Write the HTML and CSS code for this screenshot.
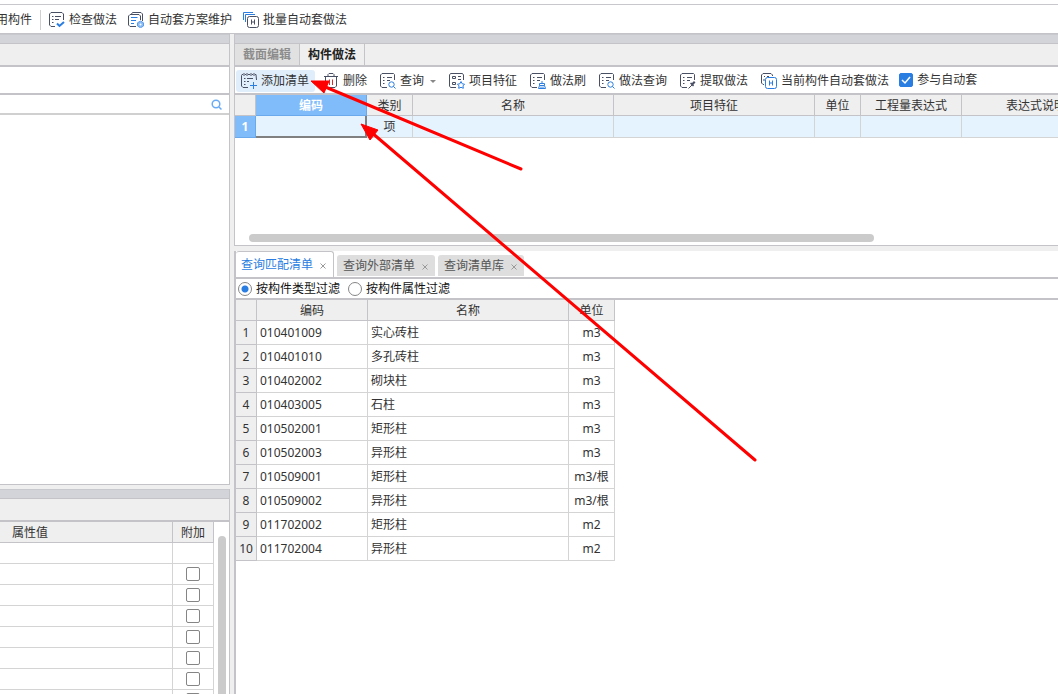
FILE: index.html
```html
<!DOCTYPE html>
<html lang="zh-CN">
<head>
<meta charset="utf-8">
<title>构件做法</title>
<link rel="stylesheet" href="styles.css">
</head>
<body>
<svg class="defs" aria-hidden="true">
  <symbol id="sheet" viewBox="0 0 16 16">
    <path class="ink" d="M7 14.5H2L.5 13V2L2 .5H13.5L14.500 1.500V7M3 4.500H4.500M7 4.500H12M3 7.500H4.500M7 7.500H10M3 10.500H4.500"/>
  </symbol>
  <symbol id="check" viewBox="0 0 16 16">
    <path class="ink" d="M6 14.500H2L.5 13V2L2 .5H13L14.500 2V8M3 4.500H4.500M6 4.500H12M3 7.500H4.500M6 7.500H10M3 10.500H4.500"/>
    <path class="blue thick" d="M8 11.500L10.500 14L15 10"/>
  </symbol>
  <symbol id="scheme" viewBox="0 0 16 16">
    <path class="ink" d="M3.500 2L4.500 .5H13L14.500 2V9M8 14.500H2L.5 13V4L2 2.500H11L12.500 4V8"/>
    <path class="blue" d="M3 5.500H9.500M3 8.500H8M3 11.500H6"/>
    <path class="gear" d="M12.500 9L15.500 10.800V14L12.500 15.800L9.500 14V10.800Z"/><circle class="hole" cx="12.500" cy="12.400" r="1"/>
  </symbol>
  <symbol id="batch" viewBox="0 0 16 16">
    <path class="blue" d="M.5 8V.5H10M2.500 10V2.500H12"/>
    <rect class="ink" x="4.500" y="4.500" width="11" height="11" rx="2"/><path class="ink" d="M8.500 7.500V12.500M11.500 7.500V12.500M8 10H12"/>
  </symbol>
  <symbol id="add" viewBox="0 0 16 16">
    <path class="ink" d="M2 1.500H1L.5 2.500V13L2 14.500H7M4 1.500H5M7 1.500H9M11 1.500H12M14 1.500H15L15.500 7M3 0V3M6 0V3M10 0V3M13 0V3M3 5.500H4.500M6 5.500H12M3 8.500H4.500M6 8.500H8M3 11.500H4.500"/>
    <path class="blue" d="M12.500 9V16M9 12.500H16"/>
  </symbol>
  <symbol id="trash" viewBox="0 0 16 16">
    <path class="ink" d="M1 3.500H15M5 3V1.500L6 .5H10L11 1.500V3M2.500 4V13L4 14.500H12L13.500 13V4"/>
    <path class="red" d="M6.500 6.500V12M9.500 6.500V12"/>
  </symbol>
  <symbol id="find" viewBox="0 0 16 16">
    <use href="#sheet"/><circle class="blue" cx="11.500" cy="11.500" r="2.700"/><path class="blue" d="M13.500 13.500L15.500 15.500"/>
  </symbol>
  <symbol id="feature" viewBox="0 0 16 16">
    <path class="ink" d="M7 14.500H1.500L.5 13V2L1.500 .5H13.500L14.500 2V7M3.500 3.500H6.500V5.500H3.500ZM3.500 9.500H6.500V11.500H3.500ZM9 3.500H12M9 6.500H12"/>
    <path class="blue" d="M12 8.500L13.200 10.800L15.500 11.200L14 12.900L14.300 15.300L12 14.300L9.700 15.300L10 12.900L8.500 11.200L10.800 10.800Z"/>
  </symbol>
  <symbol id="brush" viewBox="0 0 16 16">
    <use href="#sheet"/><path class="blue" d="M12 8V10.500M9.500 10.500H14.500V12.500H9.500ZM9.500 12.500L8.500 15.500H15.500L14.500 12.500M11 13.500V15M13 13.500V15"/>
  </symbol>
  <symbol id="pick" viewBox="0 0 16 16">
    <use href="#sheet"/><path class="ink" d="M8.500 15.500L12.500 11.500"/><path class="dark" d="M10 10.500L11 9.500L12 10L14 8L15.500 9.500L13.500 11.500L14 12.500L13 13.500Z"/>
  </symbol>
  <symbol id="current" viewBox="0 0 16 16">
    <path class="ink" d="M3 11.500H2L.5 10V2L2 .5H10L11.500 2V3M3 3.500H4M6 3.500H8M3 6V8"/>
    <rect class="blue" x="4.500" y="4.500" width="11" height="11" rx="2"/><path class="blue" d="M8.500 7.500V12.500M11.500 7.500V12.500M8 10H12"/>
  </symbol>
</svg>

<header class="topbar">
  <button class="tool cut">用构件</button>
  <span class="divider"></span>
  <button class="tool"><svg class="icon"><use href="#check"/></svg>检查做法</button>
  <button class="tool"><svg class="icon"><use href="#scheme"/></svg>自动套方案维护</button>
  <button class="tool"><svg class="icon"><use href="#batch"/></svg>批量自动套做法</button>
</header>

<main class="work">
  <aside class="side">
    <section class="panel list-panel">
      <div class="grip"></div>
      <div class="caption"></div>
      <div class="blank"></div>
      <div class="search">
        <input class="search-box" type="text" aria-label="搜索构件">
        <svg class="lens" viewBox="0 0 12 12"><circle cx="5" cy="5" r="3.800"/><path d="M8 8L10.500 10.500"/></svg>
      </div>
    </section>
    <section class="panel prop-panel">
      <div class="grip"></div>
      <div class="caption"></div>
      <div class="prop-body">
        <table class="grid props">
          <thead><tr><th class="value">属性值</th><th class="extra">附加</th></tr></thead>
          <tbody>
            <tr><td></td><td></td></tr>
            <tr><td></td><td><input class="box" type="checkbox" aria-label="附加 1"></td></tr>
            <tr><td></td><td><input class="box" type="checkbox" aria-label="附加 2"></td></tr>
            <tr><td></td><td><input class="box" type="checkbox" aria-label="附加 3"></td></tr>
            <tr><td></td><td><input class="box" type="checkbox" aria-label="附加 4"></td></tr>
            <tr><td></td><td><input class="box" type="checkbox" aria-label="附加 5"></td></tr>
            <tr><td></td><td><input class="box" type="checkbox" aria-label="附加 6"></td></tr>
            <tr><td></td><td><input class="box" type="checkbox" aria-label="附加 7"></td></tr>
          </tbody>
        </table>
        <div class="vscroll"></div>
      </div>
    </section>
  </aside>

  <div class="content">
    <section class="method">
      <div class="grip"></div>
      <nav class="tabs">
        <button class="tab muted">截面编辑</button>
        <button class="tab current">构件做法</button>
      </nav>
      <div class="toolbar">
        <button class="tool hot"><svg class="icon"><use href="#add"/></svg>添加清单</button>
        <button class="tool"><svg class="icon"><use href="#trash"/></svg>删除</button>
        <button class="tool"><svg class="icon"><use href="#find"/></svg>查询<span class="caret"></span></button>
        <button class="tool"><svg class="icon"><use href="#feature"/></svg>项目特征</button>
        <button class="tool"><svg class="icon"><use href="#brush"/></svg>做法刷</button>
        <button class="tool"><svg class="icon"><use href="#find"/></svg>做法查询</button>
        <button class="tool"><svg class="icon"><use href="#pick"/></svg>提取做法</button>
        <button class="tool"><svg class="icon"><use href="#current"/></svg>当前构件自动套做法</button>
        <label class="join"><input class="box" type="checkbox" checked>参与自动套</label>
      </div>
      <div class="method-body">
        <table class="grid items">
          <colgroup><col class="c-no"><col class="c-code"><col class="c-unit"><col class="c-name"><col class="c-name"><col class="c-unit"><col class="c-expr"><col class="c-desc"></colgroup>
          <thead><tr><th></th><th class="picked">编码</th><th>类别</th><th>名称</th><th>项目特征</th><th>单位</th><th>工程量表达式</th><th>表达式说明</th></tr></thead>
          <tbody><tr><th class="picked">1</th><td class="editing"></td><td>项</td><td></td><td></td><td></td><td></td><td></td></tr></tbody>
        </table>
        <div class="hscroll"></div>
      </div>
    </section>

    <section class="query">
      <nav class="query-tabs">
        <button class="qtab active">查询匹配清单<svg class="close" viewBox="0 0 6 6"><path d="M.5 .5L5.500 5.500M5.500 .5L.5 5.500"/></svg></button>
        <button class="qtab">查询外部清单<svg class="close" viewBox="0 0 6 6"><path d="M.5 .5L5.500 5.500M5.500 .5L.5 5.500"/></svg></button>
        <button class="qtab">查询清单库<svg class="close" viewBox="0 0 6 6"><path d="M.5 .5L5.500 5.500M5.500 .5L.5 5.500"/></svg></button>
      </nav>
      <div class="filters">
        <label class="choice"><input class="radio" type="radio" name="filter" checked>按构件类型过滤</label>
        <label class="choice"><input class="radio" type="radio" name="filter">按构件属性过滤</label>
      </div>
      <table class="grid matches">
        <colgroup><col class="c-no"><col class="c-code"><col class="c-name"><col class="c-unit"></colgroup>
        <thead><tr><th></th><th>编码</th><th>名称</th><th>单位</th></tr></thead>
        <tbody>
          <tr><th>1</th><td>010401009</td><td>实心砖柱</td><td>m3</td></tr>
          <tr><th>2</th><td>010401010</td><td>多孔砖柱</td><td>m3</td></tr>
          <tr><th>3</th><td>010402002</td><td>砌块柱</td><td>m3</td></tr>
          <tr><th>4</th><td>010403005</td><td>石柱</td><td>m3</td></tr>
          <tr><th>5</th><td>010502001</td><td>矩形柱</td><td>m3</td></tr>
          <tr><th>6</th><td>010502003</td><td>异形柱</td><td>m3</td></tr>
          <tr><th>7</th><td>010509001</td><td>矩形柱</td><td>m3/根</td></tr>
          <tr><th>8</th><td>010509002</td><td>异形柱</td><td>m3/根</td></tr>
          <tr><th>9</th><td>011702002</td><td>矩形柱</td><td>m2</td></tr>
          <tr><th>10</th><td>011702004</td><td>异形柱</td><td>m2</td></tr>
        </tbody>
      </table>
    </section>
  </div>
</main>

<svg class="arrows" width="760" height="470" viewBox="0 0 760 470" aria-hidden="true">
  <path class="shaft" d="M521 169L323 86M755 460L371 132"/>
  <path class="head" d="M311 81L329 81L324 93ZM361 124L378 130L370 140Z"/>
</svg>
</body>
</html>
```
FILE: styles.css
```css
* { box-sizing: border-box; }
html, body { height: 100%; }
body {
  margin: 0;
  display: flex;
  flex-direction: column;
  overflow: hidden;
  position: relative;
  background: #efefef;
  color: #333;
  font: 12px/16px "Noto Sans", "Noto Sans CJK SC", sans-serif;
}
button, input { font: inherit; color: inherit; margin: 0; }
button { border: 0; padding: 0; background: none; white-space: nowrap; }
.defs { position: absolute; width: 0; height: 0; }

/* icons */
.icon { width: 16px; height: 16px; flex: none; }
.ink { fill: none; stroke: #4a5064; }
.blue { fill: none; stroke: #2a7de1; }
.thick { stroke-width: 2; }
.red { fill: none; stroke: #e02828; }
.gear { fill: #8dbbf2; stroke: #5d9eea; }
.hole { fill: #fff; }
.dark { fill: #4a5064; }

/* top bar */
.topbar {
  display: flex;
  align-items: center;
  gap: 4px;
  height: 34px;
  flex: none;
  padding-top: 7px;
  background: linear-gradient(#c8c8cc, #c8c8cc) 0 4px / 100% 1px no-repeat #fff;
  border-bottom: 1px solid #c4c4c8;
}
.tool {
  display: flex;
  align-items: center;
  gap: 4px;
  height: 22px;
  padding: 0 4px 0 3px;
  border-radius: 3px;
}
.cut { margin-left: -7px; }
.divider { width: 1px; height: 20px; background: #d0d0d0; margin-right: 1px; }

/* panes */
.work { flex: 1; min-height: 0; display: flex; gap: 4px; }
.side { width: 230px; flex: none; display: flex; flex-direction: column; gap: 4px; }
.panel {
  display: flex;
  flex-direction: column;
  min-height: 0;
  overflow: hidden;
  background: #fff;
  border-right: 1px solid #c4c4c8;
}
.list-panel { flex: 11 1 0; border-bottom: 1px solid #c4c4c8; }
.prop-panel { flex: 5 1 0; }
.grip { height: 10px; flex: none; background: #d3d4da; border-top: 1px solid #c8c9cf; border-bottom: 1px solid #c4c4c8; }
.caption { height: 23px; flex: none; background: #efefef; border-bottom: 2px solid #c4c4c8; }
.blank { height: 28px; flex: none; border-bottom: 2px solid #c4c4c8; }
.search { height: 20px; flex: none; display: flex; align-items: center; padding: 1px 6px 0 0; border-bottom: 2px solid #d0d0d0; }
.search-box { flex: 1; min-width: 0; height: 16px; border: 0; outline: 0; background: none; }
.lens { width: 12px; height: 12px; fill: none; stroke: #6aabf5; stroke-width: 1.500; }

/* tables */
.grid { border-collapse: separate; border-spacing: 0; table-layout: fixed; }
.grid th, .grid td {
  padding: 0 3px;
  border-right: 1px solid #d4d4d4;
  border-bottom: 1px solid #d4d4d4;
  text-align: center;
  font-weight: normal;
  overflow: hidden;
  white-space: nowrap;
}
.grid th { background: #efefef; border-color: #c4c4c8; }
.grid thead th { padding-top: 2px; }
.c-no { width: 21px; }
.c-code { width: 111px; }
.c-unit { width: 46px; }
.c-name { width: 201px; }
.c-expr { width: 101px; }
.c-desc { width: 149px; }

.prop-body { display: flex; flex: 1; min-height: 0; overflow: hidden; align-items: flex-start; }
.props { width: 214px; }
.props tr { height: 21px; }
.props .value { text-align: left; padding-left: 12px; }
.props .extra { width: 41px; }
.props td { height: 21px; line-height: 14px; }
.vscroll { align-self: stretch; width: 8px; margin: 14px 3px 0 4px; background: #cbcbcb; border-radius: 4px 4px 0 0; }

.box {
  appearance: none;
  display: inline-block;
  width: 14px;
  height: 14px;
  border: 1px solid #858585;
  border-radius: 2px;
  background: #fff;
  vertical-align: top;
}
.box:checked {
  border-color: #2a7de1;
  background: #2a7de1 url("data:image/svg+xml,%3Csvg xmlns='http://www.w3.org/2000/svg' viewBox='0 0 12 12'%3E%3Cpath d='M2 6L5 9L10 3' fill='none' stroke='white' stroke-width='1.5'/%3E%3C/svg%3E") center / 12px no-repeat;
}

/* method pane */
.content { flex: 1; min-width: 0; display: flex; flex-direction: column; gap: 5px; }
.method {
  flex: 10 1 0;
  min-height: 0;
  display: flex;
  flex-direction: column;
  overflow: hidden;
  background: #fff;
  border-left: 1px solid #c4c4c8;
  border-bottom: 1px solid #c4c4c8;
}
.tabs { display: flex; height: 23px; flex: none; background: #efefef; border-bottom: 2px solid #c4c4c8; }
.tab { padding: 1px 8px 0; border-right: 1px solid #c4c4c8; font-weight: bold; }
.muted { background: #e1e1e1; color: #8c8c8c; }
.current { color: #222; }
.toolbar { display: flex; align-items: center; height: 28px; flex: none; padding: 2px 1px 0; border-bottom: 2px solid #c4c4c8; }
.toolbar .tool { gap: 4px; padding: 0 5px; margin-right: 3px; flex: none; }
.toolbar .hot { background: #e0eefc; padding-right: 6px; }
.caret { border: 3px solid transparent; border-top-color: #888; border-bottom: 0; margin-left: 2px; }
.join { display: flex; align-items: center; gap: 4px; flex: none; margin-left: 2px; padding-bottom: 3px; white-space: nowrap; }
.method-body { flex: 1; min-height: 0; overflow: hidden; display: flex; flex-direction: column; justify-content: space-between; }
.items { width: 876px; }
.items thead tr { height: 21px; }
.items tbody tr { height: 22px; }
.items td { background: #e5f3ff; }
.grid .picked { background: #80bbfa; color: #fff; font-weight: bold; border-color: #6aa9ec; }
.items .editing { border-right: 2px solid #808080; border-bottom: 2px solid #808080; }
.hscroll { width: 76%; height: 8px; flex: none; margin: 0 0 3px 14px; border-radius: 4px; background: #cbcbcb; }

/* query pane */
.query { flex: 21 1 0; min-height: 0; overflow: hidden; background: #fff; border-left: 2px solid #c4c4c8; }
.query-tabs { display: flex; align-items: flex-end; gap: 3px; height: 28px; border-bottom: 2px solid #c4c4c8; }
.qtab {
  display: flex;
  align-items: center;
  gap: 7px;
  height: 21px;
  margin-bottom: 1px;
  padding: 1px 7px 0 6px;
  border-radius: 3px 3px 0 0;
  background: #dedede;
  color: #555;
}
.active { height: 26px; margin-bottom: 0; padding: 1px 7px 0 5px; background: #fff; color: #2a7de1; border: 1px solid #c4c4c8; border-width: 1px 1px 0 0; }
.close { width: 6px; height: 6px; fill: none; stroke: #999; margin-top: 2px; }
.filters { display: flex; align-items: center; gap: 8px; height: 21px; padding: 1px 0 0 2px; border-bottom: 2px solid #c4c4c8; color: #111; }
.choice { display: flex; align-items: center; gap: 4px; }
.radio {
  appearance: none;
  width: 14px;
  height: 14px;
  border: 1px solid #858585;
  border-radius: 50%;
  background: #fff;
}
.radio:checked { background: radial-gradient(circle, #2a7de1 3px, #fff 4px); }
.matches { width: 379px; }
.matches thead tr { height: 21px; }
.matches tbody tr { height: 24px; }
.matches td { text-align: left; padding-top: 1px; }
.matches td:last-child { text-align: center; }
.matches tbody th { padding: 2px 0 0; }

/* pointer arrows over the page */
.arrows { position: absolute; left: 0; top: 0; pointer-events: none; }
.shaft { stroke: #f00; stroke-width: 3; stroke-linecap: round; }
.head { fill: #f00; stroke: #f00; }
```
